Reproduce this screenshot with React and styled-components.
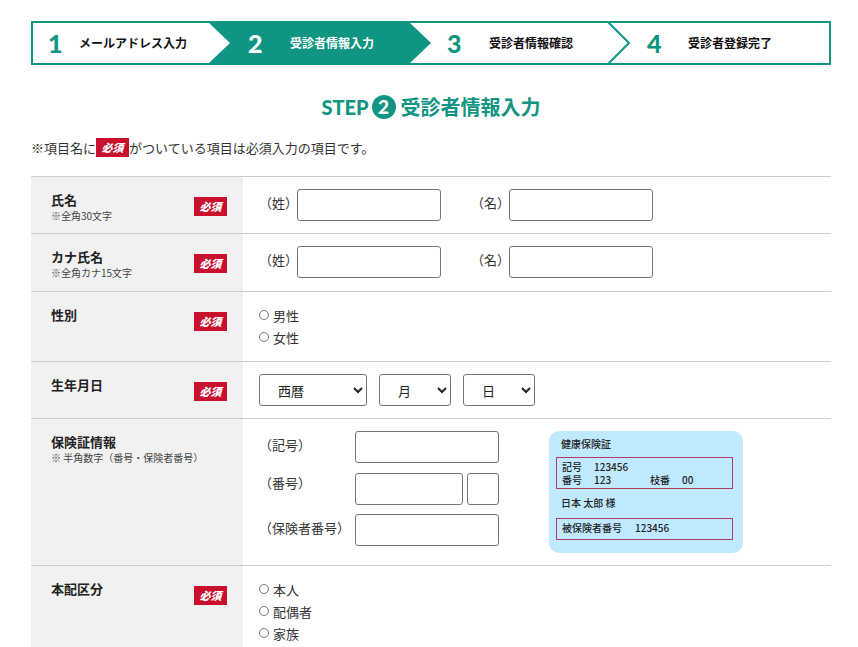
import React from "react";
import styled, { createGlobalStyle } from "styled-components";

const TEAL = "#0f9581";
const JP = '"Noto Sans CJK JP", "Noto Sans", sans-serif';

const GlobalStyle = createGlobalStyle`
  html, body {
    margin: 0;
    padding: 0;
    background: #fff;
    overflow: hidden;
  }
  body {
    font-family: ${JP};
    color: #333;
  }
`;

const Page = styled.div`
  width: 800px;
  height: 647px;
  padding: 21px 0 0 31px;
  overflow: hidden;
`;

const Stepper = styled.ol`
  display: grid;
  grid-template-columns: 176px 201px 198px 221px;
  width: 800px;
  height: 44px;
  box-sizing: border-box;
  margin: 0;
  padding: 0;
  list-style: none;
  border: 2px solid ${TEAL};
`;

const Step = styled.li`
  position: relative;
  display: flex;
  align-items: center;
  padding-left: ${(p) => p.$pad}px;
  background: ${(p) => (p.$active ? TEAL : "#fff")};
  color: ${(p) => (p.$active ? "#fff" : "#111")};
`;

const StepNum = styled.span`
  width: ${(p) => p.$width}px;
  font-family: Lato, Inter, sans-serif;
  font-size: 25px;
  font-weight: 900;
  line-height: 1;
  color: ${(p) => (p.$active ? "#fff" : TEAL)};
`;

const StepLabel = styled.span`
  font-size: 12px;
  font-weight: 700;
  line-height: 1;
`;

const Arrow = styled.svg`
  position: absolute;
  z-index: 1;
  top: 0;
  left: 100%;
  width: 23px;
  height: 40px;
  display: block;
`;

const Title = styled.h1`
  display: flex;
  justify-content: center;
  align-items: center;
  height: 26px;
  margin: 29px 0 0;
  color: ${TEAL};
  font-size: 20px;
  font-weight: 700;
  line-height: 26px;
`;

const TitleStep = styled.span`
  font-family: Lato, Inter, sans-serif;
  font-weight: 900;
  font-size: 20px;
`;

const TitleCircle = styled.span`
  width: 24px;
  height: 24px;
  margin: 0 5px 0 3px;
  border-radius: 50%;
  background: ${TEAL};
  color: #fff;
  display: flex;
  align-items: center;
  justify-content: center;
  font-family: Lato, Inter, sans-serif;
  font-size: 19px;
  font-weight: 900;
`;

const Note = styled.p`
  display: flex;
  align-items: center;
  height: 19px;
  margin: 18px 0 19px;
  font-size: 13px;
  line-height: 19px;
`;

const Required = styled.span`
  flex: none;
  display: block;
  width: 33px;
  height: 19px;
  margin-top: ${(p) => p.$top || 0}px;
  background: #c9102c;
  color: #fff;
  font-size: 11px;
  font-weight: 900;
  font-style: italic;
  line-height: 19px;
  text-align: center;
`;

const Row = styled.section`
  display: grid;
  grid-template-columns: 212px 588px;
  min-height: ${(p) => p.$height}px;
  box-sizing: border-box;
  border-top: 1px solid #ccc;
`;

const Head = styled.div`
  display: flex;
  justify-content: space-between;
  padding: 14px 16px 0 20px;
  background: #f1f1f1;
`;

const HeadTitle = styled.div`
  font-size: 13px;
  font-weight: 700;
  line-height: 18px;
  color: #222;
`;

const HeadNote = styled.div`
  font-size: 10px;
  font-weight: 400;
  line-height: 14px;
  color: #444;
`;

const Body = styled.div`
  display: flex;
  align-items: ${(p) => p.$align || "flex-start"};
  padding: 12px 0 0 16px;
`;

const NameGroup = styled.label`
  display: flex;
  align-items: center;
  margin-right: 30px;
  font-size: 13px;
`;

const FieldCaption = styled.span`
  width: ${(p) => p.$width}px;
  flex: none;
  margin-top: ${(p) => p.$shift || -4}px;
  font-size: 13px;
  line-height: 18px;
  color: #333;
`;

const TextInput = styled.input`
  display: block;
  width: ${(p) => p.$width || 144}px;
  height: 32px;
  box-sizing: border-box;
  border: 1px solid #767676;
  border-radius: 3px;
  background: #fff;
`;

const RadioList = styled.div`
  display: flex;
  flex-direction: column;
  padding-top: 0;
`;

const RadioRow = styled.label`
  display: flex;
  align-items: center;
  height: 22px;
  font-size: 13px;
  color: #333;
`;

const Radio = styled.input.attrs({ type: "radio" })`
  width: 10px;
  height: 10px;
  margin: 0 4px 0 0;
  accent-color: #767676;
`;

const SelectBox = styled.select`
  width: ${(p) => p.$width}px;
  height: 32px;
  margin-right: 12px;
  padding-left: ${(p) => p.$pad}px;
  box-sizing: border-box;
  border: 1px solid #767676;
  border-radius: 3px;
  background-color: #fff;
  color: #222;
  font-family: ${JP};
  font-size: 13px;
`;

const InsuranceFields = styled.div`
  display: grid;
  grid-template-rows: 32px 32px 32px;
  row-gap: 9.5px;
  width: 240px;
`;

const InsuranceRow = styled.label`
  display: flex;
  align-items: center;
`;

const NumberInputs = styled.div`
  display: flex;
  gap: 4px;
`;

const Card = styled.div`
  width: 194px;
  height: 122px;
  margin-left: 50px;
  padding: 6px 10px 0 7px;
  box-sizing: border-box;
  border-radius: 10px;
  background: #bfe9fe;
  color: #222;
  font-size: 10px;
  font-weight: 500;
  line-height: 13px;
`;

const CardLine = styled.div`
  padding-left: 5px;
  margin-top: ${(p) => p.$top || 0}px;
`;

const CardBox = styled.div`
  height: ${(p) => p.$height}px;
  margin-top: ${(p) => p.$top}px;
  padding: 2px 0 0 5px;
  box-sizing: border-box;
  border: 1px solid #b33a5e;
`;

const CardRow = styled.div`
  display: grid;
  grid-template-columns: ${(p) => p.$cols};
`;

const steps = [
  { num: "1", label: "メールアドレス入力", pad: 15, width: 31 },
  { num: "2", label: "受診者情報入力", pad: 39, width: 42, active: true },
  { num: "3", label: "受診者情報確認", pad: 37, width: 42 },
  { num: "4", label: "受診者登録完了", pad: 39, width: 41 },
];

const StepArrow = ({ index }) => {
  if (index === 0) {
    return (
      <Arrow viewBox="-23 0 23 40" style={{ left: "auto", right: -0 }}>
        <polygon points="-23,0 -2,0 -2,0 -23,0" fill="#fff" />
      </Arrow>
    );
  }
  return null;
};

const App = () => {
  return (
    <Page>
      <GlobalStyle />
      <Stepper>
        {steps.map((s, i) => (
          <Step key={s.num} $pad={s.pad} $active={s.active}>
            <StepNum $width={s.width} $active={s.active}>{s.num}</StepNum>
            <StepLabel>{s.label}</StepLabel>
            <StepArrow index={-1} />
            {i === 0 && (
              <Arrow viewBox="0 0 23 40">
                <polygon points="0,0 0,0 21,20 0,40" fill="#fff" />
              </Arrow>
            )}
            {i === 1 && (
              <Arrow viewBox="0 0 23 40">
                <polygon points="0,0 21,20 0,40" fill={TEAL} />
              </Arrow>
            )}
            {i === 2 && (
              <Arrow viewBox="0 0 23 40">
                <polyline points="0,-1 21,20 0,41" fill="none" stroke={TEAL} strokeWidth="2" />
              </Arrow>
            )}
          </Step>
        ))}
      </Stepper>

      <Title>
        <TitleStep>STEP</TitleStep>
        <TitleCircle>2</TitleCircle>
        受診者情報入力
      </Title>

      <Note>
        ※項目名に<Required>必須</Required>がついている項目は必須入力の項目です。
      </Note>

      <Row $height={57}>
        <Head>
          <div>
            <HeadTitle>氏名</HeadTitle>
            <HeadNote>※全角30文字</HeadNote>
          </div>
          <Required $top={6}>必須</Required>
        </Head>
        <Body>
          <NameGroup>
            <FieldCaption $width={38}>（姓）</FieldCaption>
            <TextInput />
          </NameGroup>
          <NameGroup>
            <FieldCaption $width={38}>（名）</FieldCaption>
            <TextInput />
          </NameGroup>
        </Body>
      </Row>

      <Row $height={58}>
        <Head>
          <div>
            <HeadTitle>カナ氏名</HeadTitle>
            <HeadNote>※全角カナ15文字</HeadNote>
          </div>
          <Required $top={6}>必須</Required>
        </Head>
        <Body>
          <NameGroup>
            <FieldCaption $width={38}>（姓）</FieldCaption>
            <TextInput />
          </NameGroup>
          <NameGroup>
            <FieldCaption $width={38}>（名）</FieldCaption>
            <TextInput />
          </NameGroup>
        </Body>
      </Row>

      <Row $height={70}>
        <Head>
          <HeadTitle>性別</HeadTitle>
          <Required $top={6}>必須</Required>
        </Head>
        <Body>
          <RadioList>
            <RadioRow><Radio name="gender" />男性</RadioRow>
            <RadioRow><Radio name="gender" />女性</RadioRow>
          </RadioList>
        </Body>
      </Row>

      <Row $height={57}>
        <Head>
          <HeadTitle>生年月日</HeadTitle>
          <Required $top={6}>必須</Required>
        </Head>
        <Body>
          <SelectBox $width={108} $pad={14}><option>西暦</option></SelectBox>
          <SelectBox $width={72} $pad={14}><option>月</option></SelectBox>
          <SelectBox $width={72} $pad={14}><option>日</option></SelectBox>
        </Body>
      </Row>

      <Row $height={147}>
        <Head>
          <div>
            <HeadTitle>保険証情報</HeadTitle>
            <HeadNote>※ 半角数字（番号・保険者番号）</HeadNote>
          </div>
        </Head>
        <Body>
          <InsuranceFields>
            <InsuranceRow>
              <FieldCaption $width={96}>（記号）</FieldCaption>
              <TextInput />
            </InsuranceRow>
            <InsuranceRow>
              <FieldCaption $width={96} $shift={-12}>（番号）</FieldCaption>
              <NumberInputs>
                <TextInput $width={108} />
                <TextInput $width={32} />
              </NumberInputs>
            </InsuranceRow>
            <InsuranceRow>
              <FieldCaption $width={96}>（保険者番号）</FieldCaption>
              <TextInput />
            </InsuranceRow>
          </InsuranceFields>
          <Card>
            <CardLine>健康保険証</CardLine>
            <CardBox $height={32} $top={7}>
              <CardRow $cols="32px 1fr">
                <span>記号</span>
                <span>123456</span>
              </CardRow>
              <CardRow $cols="32px 56px 32px 1fr">
                <span>番号</span>
                <span>123</span>
                <span>枝番</span>
                <span>00</span>
              </CardRow>
            </CardBox>
            <CardLine $top={7}>日本 太郎 様</CardLine>
            <CardBox $height={22} $top={9}>
              <CardRow $cols="73px 1fr">
                <span>被保険者番号</span>
                <span>123456</span>
              </CardRow>
            </CardBox>
          </Card>
        </Body>
      </Row>

      <Row $height={90}>
        <Head>
          <HeadTitle>本配区分</HeadTitle>
          <Required $top={6}>必須</Required>
        </Head>
        <Body>
          <RadioList>
            <RadioRow><Radio name="relation" />本人</RadioRow>
            <RadioRow><Radio name="relation" />配偶者</RadioRow>
            <RadioRow><Radio name="relation" />家族</RadioRow>
          </RadioList>
        </Body>
      </Row>
    </Page>
  );
};

export default App;
